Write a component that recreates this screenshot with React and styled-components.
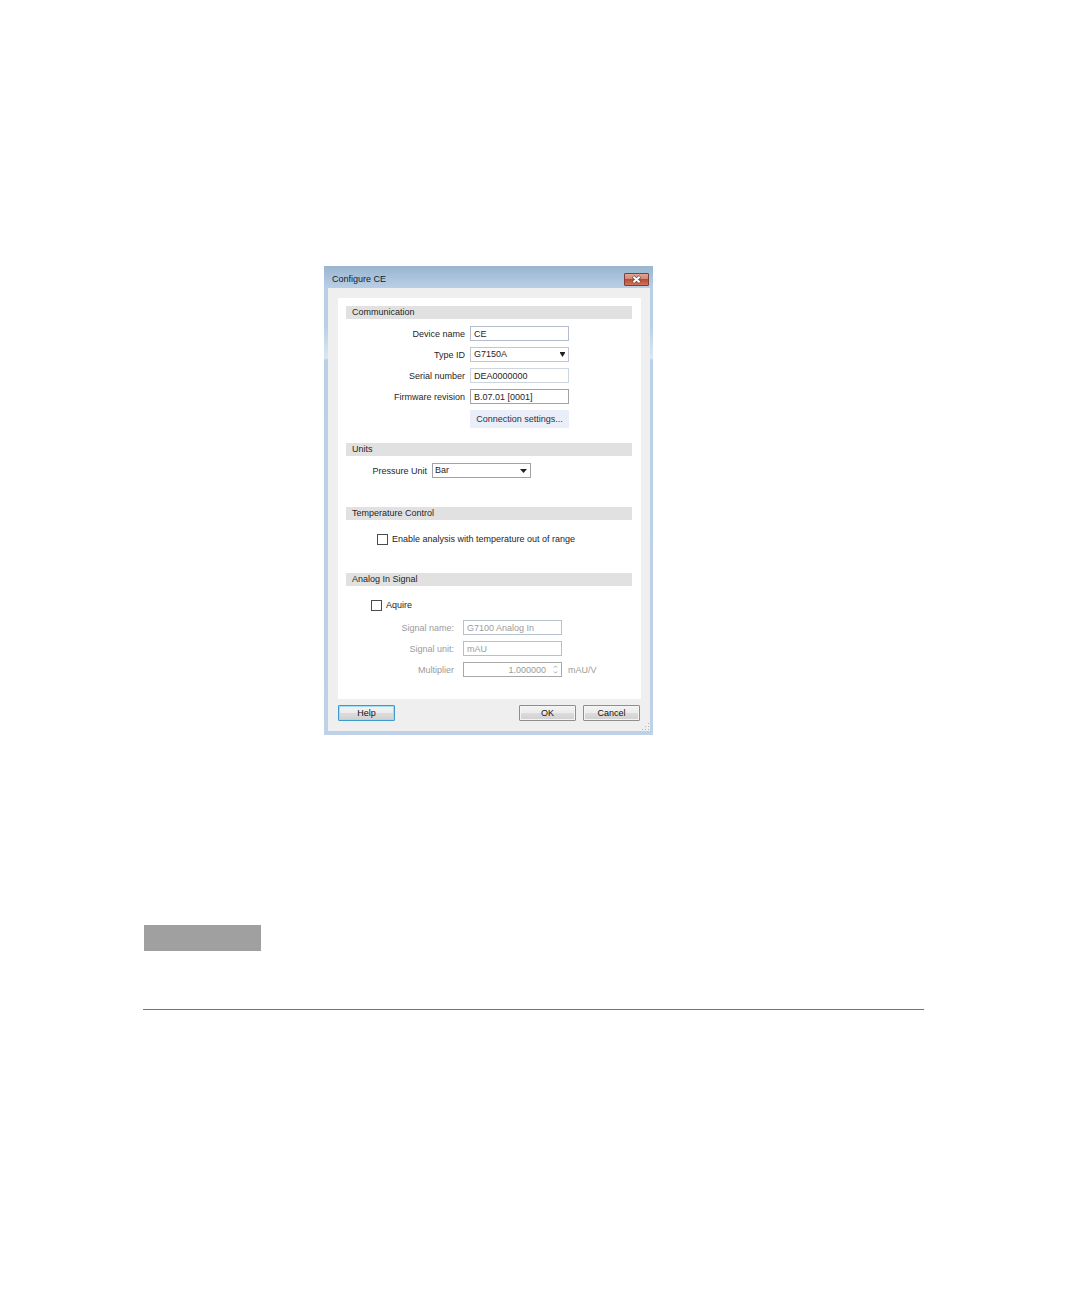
import { useState } from "react";
import styled, { createGlobalStyle } from "styled-components";

export default function App() {
    const [deviceName, setDeviceName] = useState("CE");
    const [typeId, setTypeId] = useState("G7150A");
    const [firmware, setFirmware] = useState("B.07.01 [0001]");
    const [pressure, setPressure] = useState("Bar");
    const [outOfRange, setOutOfRange] = useState(false);
    const [acquire, setAcquire] = useState(false);

    return (
        <Page>
            <GlobalStyle />
            <Dialog role="dialog" aria-labelledby="dialog-title">
                <TitleBar>
                    <Title id="dialog-title">Configure CE</Title>
                    <CloseButton type="button" aria-label="Close">
                        <svg width="11" height="9" viewBox="0 0 11 9">
                            <path d="M2 1.5 L9 7.5 M9 1.5 L2 7.5" stroke="#6b4a4c" strokeWidth="3.6" />
                            <path d="M2.4 1.8 L8.6 7.2 M8.6 1.8 L2.4 7.2" stroke="#ffffff" strokeWidth="2" />
                        </svg>
                    </CloseButton>
                </TitleBar>

                <Body>
                    <Panel>
                        <Heading>Communication</Heading>
                        <Fields $label={119} $gap={5} $top={7} $bottom={15}>
                            <label htmlFor="device">Device name</label>
                            <TextInput id="device" $border="#b4bccf" value={deviceName} onChange={e => setDeviceName(e.target.value)} />

                            <label htmlFor="type">Type ID</label>
                            <SelectBox>
                                <Select id="type" $border="#c3c7d3" value={typeId} onChange={e => setTypeId(e.target.value)}>
                                    <option>G7150A</option>
                                </Select>
                                <Arrow width="5" height="5" viewBox="0 0 5 5">
                                    <path d="M0 0 H5 V1 L2.5 5 L0 1 Z" fill="#222222" />
                                </Arrow>
                            </SelectBox>

                            <label htmlFor="serial">Serial number</label>
                            <TextInput id="serial" $border="#cfd5dc" value="DEA0000000" readOnly />

                            <label htmlFor="firmware">Firmware revision</label>
                            <TextInput id="firmware" $border="#a2a2a2" value={firmware} onChange={e => setFirmware(e.target.value)} />

                            <SettingsButton type="button">Connection settings...</SettingsButton>
                        </Fields>

                        <Heading>Units</Heading>
                        <Fields $label={81} $gap={5} $top={7} $bottom={29}>
                            <label htmlFor="pressure">Pressure Unit</label>
                            <SelectBox>
                                <Select id="pressure" $border="#a2a2a2" $left={2} value={pressure} onChange={e => setPressure(e.target.value)}>
                                    <option>Bar</option>
                                </Select>
                                <Arrow width="7" height="4" viewBox="0 0 7 4">
                                    <path d="M0 0 H7 L3.5 4 Z" fill="#222222" />
                                </Arrow>
                            </SelectBox>
                        </Fields>

                        <Heading>Temperature Control</Heading>
                        <CheckRow $left={31} $top={13} $bottom={28}>
                            <Checkbox type="checkbox" checked={outOfRange} onChange={e => setOutOfRange(e.target.checked)} />
                            Enable analysis with temperature out of range
                        </CheckRow>

                        <Heading>Analog In Signal</Heading>
                        <CheckRow $left={25} $top={13} $bottom={0}>
                            <Checkbox type="checkbox" checked={acquire} onChange={e => setAcquire(e.target.checked)} />
                            Aquire
                        </CheckRow>
                        <Fields $label={111} $gap={6} $inset={3} $top={9} $bottom={22} $muted>
                            <label htmlFor="signal">Signal name:</label>
                            <TextInput id="signal" $border="#b8c2cf" defaultValue="G7100 Analog In" disabled={!acquire} />

                            <label htmlFor="unit">Signal unit:</label>
                            <TextInput id="unit" $border="#b4bfd0" defaultValue="mAU" disabled={!acquire} />

                            <label htmlFor="multiplier">Multiplier</label>
                            <SelectBox>
                                <TextInput id="multiplier" $border="#a8a8a8" $number defaultValue="1.000000" disabled={!acquire} />
                                <Arrow width="5" height="9" viewBox="0 0 5 9">
                                    <path d="M1 2.5 L2.5 1 L4 2.5 M1 6.5 L2.5 8 L4 6.5" fill="none" stroke="#a0a0a0" />
                                </Arrow>
                            </SelectBox>
                            <span>mAU/V</span>
                        </Fields>
                    </Panel>

                    <Footer>
                        <Button type="button" $active>Help</Button>
                        <Spacer />
                        <Button type="button">OK</Button>
                        <Button type="button">Cancel</Button>
                    </Footer>
                    <Grip width="9" height="9" viewBox="0 0 9 9">
                        <path d="M7 1h1v1h-1z M4 4h1v1h-1z M7 4h1v1h-1z M1 7h1v1h-1z M4 7h1v1h-1z M7 7h1v1h-1z" fill="#b4b4b4" />
                    </Grip>
                </Body>
            </Dialog>

            <Note />
            <Rule />
        </Page>
    );
};

const GlobalStyle = createGlobalStyle`
* {
    box-sizing: border-box;
}
body {
    margin: 0;
    background-color: #ffffff;
}
body, button, input, select {
    font-family: 'Liberation Sans', Arial, sans-serif;
    font-size: 9px;
    line-height: 13px;
    color: #262626;
}
`;

const Page = styled.main`
    display: flex;
    flex-direction: column;
    padding: 266px 156px 60px 143px;
`;

const Dialog = styled.section`
    width: 100%;
    max-width: 329px;
    margin-left: 181px;
    padding: 0 3px 4px 4px;
    background: linear-gradient(#9ab5d0 0, #b9cfe6 22px, #b9cfe6 60px, #d9e7f5 92px, #b9d0e6 94px, #bdd1e8 100%);
`;

const TitleBar = styled.header`
    height: 22px;
    padding: 5px 1px 0 4px;
    display: flex;
    justify-content: space-between;
    align-items: center;
`;

const Title = styled.h1`
    margin: 0;
    font-size: 9px;
    font-weight: 400;
    color: #101c2c;
`;

const CloseButton = styled.button`
    width: 25px;
    height: 13px;
    padding: 0;
    border: 1px solid #7a4040;
    border-radius: 1px;
    background: linear-gradient(#e0a597 0, #d48875 45%, #bd4a30 50%, #d3735a 100%);
    display: flex;
    justify-content: center;
    align-items: center;
`;

const Body = styled.div`
    position: relative;
    padding: 10px 9px 10px 10px;
    background-color: #efefef;
`;

const Panel = styled.div`
    padding: 8px 9px 0 8px;
    background-color: #ffffff;
`;

const Heading = styled.h2`
    height: 13px;
    margin: 0;
    padding-left: 6px;
    background-color: #e1e1e1;
    font-size: 9px;
    font-weight: 400;
`;

const Fields = styled.div`
    display: grid;
    grid-template-columns: ${props => props.$label}px 99px 1fr;
    column-gap: ${props => props.$gap}px;
    row-gap: 6px;
    padding: ${props => props.$top}px 0 ${props => props.$bottom}px;
    color: ${props => props.$muted ? "#9b9b9b" : "inherit"};
    white-space: nowrap;

    label, span {
        padding-top: 2px;
    }
    label {
        grid-column: 1;
        padding-right: ${props => props.$inset || 0}px;
        text-align: right;
    }
`;

const TextInput = styled.input`
    display: block;
    width: 100%;
    height: 15px;
    padding: 0 ${props => props.$number ? 15 : 3}px 0 3px;
    border: 1px solid ${props => props.$border};
    border-radius: 0;
    background-color: #ffffff;
    text-align: ${props => props.$number ? "right" : "left"};

    &:disabled {
        color: #9b9b9b;
    }
`;

const SelectBox = styled.div`
    position: relative;
`;

const Select = styled.select`
    appearance: none;
    display: block;
    width: 100%;
    height: 15px;
    padding: 0 12px 0 ${props => props.$left || 3}px;
    border: 1px solid ${props => props.$border};
    border-radius: 0;
    background-color: #ffffff;
`;

const Arrow = styled.svg`
    position: absolute;
    top: 0;
    bottom: 0;
    right: 4px;
    margin: auto 0;
    pointer-events: none;
`;

const SettingsButton = styled.button`
    grid-column: 2;
    height: 18px;
    padding: 0;
    border: none;
    border-radius: 1px;
    background-color: #e9eef8;
    color: #26324a;
`;

const CheckRow = styled.label`
    display: flex;
    align-items: center;
    gap: 4px;
    padding: ${props => props.$top}px 0 ${props => props.$bottom}px ${props => props.$left}px;
    line-height: 12px;
`;

const Checkbox = styled.input`
    appearance: none;
    width: 11px;
    height: 11px;
    margin: 0;
    border: 1px solid #4c4c4c;
    background-color: #ffffff;

    &:checked {
        background-color: #4c4c4c;
        box-shadow: inset 0 0 0 2px #ffffff;
    }
`;

const Footer = styled.footer`
    display: flex;
    gap: 7px;
    padding: 6px 1px 0 0;
`;

const Spacer = styled.div`
    flex: 1;
`;

const Button = styled.button`
    width: 57px;
    height: 16px;
    padding: 0;
    border: 1px solid ${props => props.$active ? "#3c9ad0" : "#8e8e8e"};
    border-radius: 1px;
    background: linear-gradient(#f3f3f3 0, #ececec 48%, #dcdcdc 52%, #d0d0d0 100%);
    box-shadow: inset 0 0 0 1px ${props => props.$active ? "#9fdcf5" : "#f4f4f4"};
    color: #111111;
`;

const Grip = styled.svg`
    position: absolute;
    right: 0;
    bottom: 0;
`;

const Note = styled.div`
    width: 117px;
    height: 26px;
    margin: 190px 0 58px 1px;
    background-color: #a0a0a0;
`;

const Rule = styled.hr`
    width: 100%;
    height: 1px;
    margin: 0;
    border: none;
    background-color: #747474;
`;
